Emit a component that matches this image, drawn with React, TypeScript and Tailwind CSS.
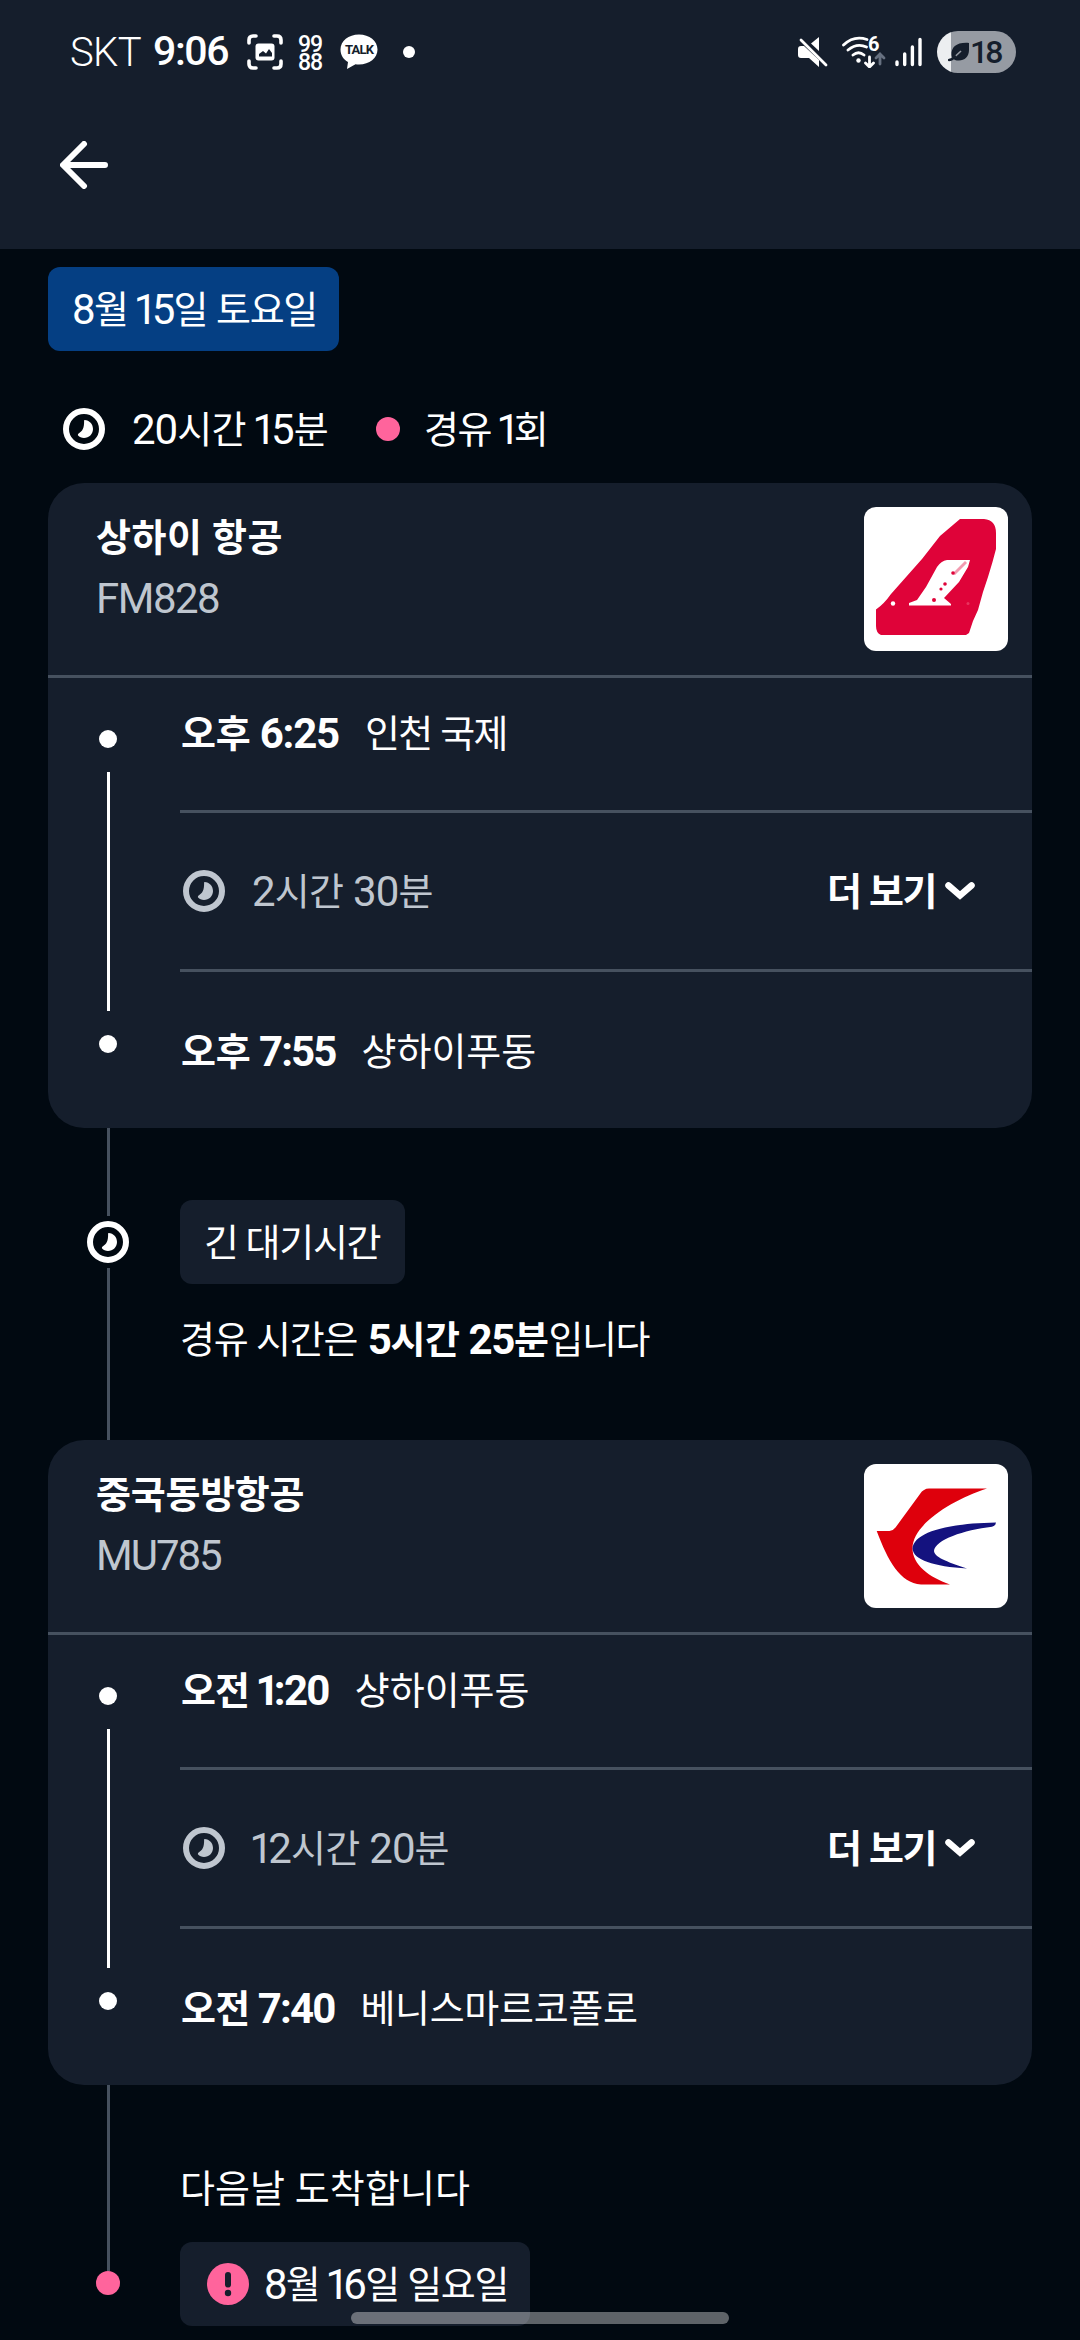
import React from "react";

const RUNS = /([\uac00-\ud7a3]+|1)/;
const HANGUL = /^[\uac00-\ud7a3]/;

// --k is the tracking of Hangul runs, --l the tracking of Latin runs and digits.
function T({ children, className = "[--k:-0.25px] [--l:-0.8px]" }: { children: string; className?: string }) {
  return (
    <span className={`block whitespace-pre pt-[3px] text-[42px] leading-[60px] ${className}`}>
      {children.split(RUNS).filter(Boolean).map((part, i) =>
        HANGUL.test(part) ? (
          <span key={i} className="relative -top-px text-[38px] tracking-[var(--k)]">{part}</span>
        ) : part === "1" ? (
          <span key={i} className="-ml-[2.5px] mr-[-4px] tracking-[var(--l)]">{part}</span>
        ) : (
          <span key={i} className="tracking-[var(--l)]">{part}</span>
        )
      )}
    </span>
  );
}

function Clock({ className = "" }: { className?: string }) {
  return (
    <svg viewBox="0 0 42 42" className={`size-[42px] shrink-0 ${className}`} fill="none">
      <circle cx="21" cy="21" r="18" stroke="currentColor" strokeWidth="6" />
      <path d="M21.5 12C26.5 12.3 30 16.2 30 21C30 26 26 30 21 30C18.6 30 16.4 29 14.9 27.3C14.8 26.6 15 26 15.6 25.6C19.4 23 21.3 20.5 21.1 12.5Z" fill="currentColor" />
    </svg>
  );
}

function ShanghaiLogo() {
  return (
    <svg viewBox="0 0 144 144" className="size-36">
      <path d="M96 12H120Q132 13 132 26V42L128.5 55L124 70L119 85L114 103L109 114L105 126L102 128H17Q12 126 12 119V102.500Q20 97 27 87L58 52L76 29Z" fill="#df0339" />
      <path d="M83 53H106L104 60L95 75L80 91L87 97V98.500H45V96L53 93L62 80L73 60Q77 54 83 53Z" fill="#fff" />
      <g fill="#df0339">
        <path d="M101 54L103 56L91 68L88 67Z" opacity=".4" />
        <circle cx="89" cy="66" r="1.800" />
        <circle cx="81" cy="77" r="1.800" />
        <circle cx="77" cy="82" r="1.600" />
        <circle cx="70" cy="93" r="2" />
      </g>
      <circle cx="29" cy="96.500" r="2.200" fill="#fff" />
      <circle cx="104" cy="96.500" r="1.500" fill="#e8345f" />
    </svg>
  );
}

function EasternLogo() {
  return (
    <svg viewBox="0 0 144 144" className="size-36">
      <path d="M12.700 67H25.500Q29 66.800 31.500 63.500L56 30Q59.500 24.500 65 24.500H123C88 36 49 60 48.500 84C48.500 101 65 113 86 120.500H57C36 119 24 97 12.700 67Z" fill="#de000c" />
      <path d="M48.500 84.500C50 69 80 59.500 132 58.500Q131.500 62 128 62.800C100 66 71 76 70 87C70.500 94 87 99 103 104.500C70 102.500 49 96 48.500 84.500Z" fill="#14127f" />
    </svg>
  );
}

function Duration({ children }: { children: string }) {
  return (
    <div className="flex h-[156px] items-center pl-[3px] text-[#bfc6cf]">
      <Clock />
      <T className="ml-[27px] [--k:-0.6px] [--l:-0.9px]">{children}</T>
      <button className="ml-auto mr-[57px] flex items-center gap-[9px] text-white">
        <T className="font-bold [--k:-1.5px] [--l:-1.8px]">더 보기</T>
        <svg viewBox="0 0 30 18" className="h-[18px] w-[30px]" fill="none" stroke="#fff" strokeWidth="6.5" strokeLinecap="round" strokeLinejoin="miter">
          <path d="M3.500 3.500L15 13.500L26.500 3.500" />
        </svg>
      </button>
    </div>
  );
}

interface Label {
  text: string;
  fit: string;
}

interface Flight {
  airline: Label;
  code: Label;
  logo: React.ReactNode;
  depart: [Label, Label];
  duration: string;
  arrive: [Label, Label];
}

function Stop({ stop: [time, place] }: { stop: [Label, Label] }) {
  return (
    <div className="flex gap-[26px] pl-[1px]">
      <T className={`font-bold ${time.fit}`}>{time.text}</T>
      <T className={place.fit}>{place.text}</T>
    </div>
  );
}

function FlightCard({ f }: { f: Flight }) {
  return (
    <section className="mx-12 h-[645px] rounded-[36px] bg-[#151e2c]">
      <header className="flex h-[195px] justify-between border-b-[3px] border-[#46515f] pl-[48px] pr-6">
        <div className="pt-[22px]">
          <T className={`font-bold ${f.airline.fit}`}>{f.airline.text}</T>
          <T className={`-mt-[3px] text-[#bfc6cf] ${f.code.fit}`}>{f.code.text}</T>
        </div>
        <div className="mt-6 size-36 overflow-hidden rounded-xl bg-white">{f.logo}</div>
      </header>
      <div className="flex">
        <div className="flex w-[132px] flex-col items-center pr-3 pt-[52px]">
          <i className="size-[18px] rounded-full bg-white" />
          <i className="my-6 ml-px h-[239px] w-[3px] bg-white" />
          <i className="size-[18px] rounded-full bg-white" />
        </div>
        <div className="flex-1">
          <div className="h-[132px] pt-[23px]">
            <Stop stop={f.depart} />
          </div>
          <div className="border-y-[3px] border-[#46515f]">
            <Duration>{f.duration}</Duration>
          </div>
          <div className="pt-[47px]">
            <Stop stop={f.arrive} />
          </div>
        </div>
      </div>
    </section>
  );
}

function StatusBar() {
  return (
    <div className="flex h-[105px] items-start justify-between pl-[70px] pr-16 pt-[30px] text-white">
      <div className="flex h-[44px] items-center">
        <span className="w-[83px] pt-px text-[40px] font-light tracking-[-0.6px]">SKT</span>
        <span className="w-[94px] text-[41px] font-medium tracking-[-1.4px]">9:06</span>
        <svg viewBox="0 0 36 36" className="size-[36px]" fill="none" stroke="#fff" strokeWidth="3.6" strokeLinecap="round">
          <path d="M2 9V6Q2 2 6 2H9M27 2H30Q34 2 34 6V9M34 27V30Q34 34 30 34H27M9 34H6Q2 34 2 30V27" />
          <rect x="8.500" y="9.500" width="19" height="17" rx="3" fill="#fff" stroke="none" />
          <path d="M12 22.500V20L16 17L19 19.500L22 15L25 19V22.500Z" fill="#151e2c" stroke="none" />
        </svg>
        <div className="ml-[14px] mt-[3px] w-[26px] text-center text-[23px] font-medium leading-[18px] tracking-[-1px]">
          99<br />88
        </div>
        <div className="relative ml-[17px] flex h-[36px] w-[38px] justify-center">
          <svg viewBox="0 0 38 36" className="absolute inset-0" fill="#fff">
            <path d="M19 0.500C8.500 0.500 0.500 7 0.500 15.500C0.500 21 3.500 25.500 8 28L7 35L15.500 30.200Q17 30.500 19 30.500C29.500 30.500 37.500 24 37.500 15.500C37.500 7 29.500 0.500 19 0.500Z" />
          </svg>
          <span className="relative text-[13px] font-bold leading-[31px] tracking-[-0.8px] text-[#151e2c]">TALK</span>
        </div>
        <i className="ml-[25px] size-[12px] rounded-full bg-white" />
      </div>
      <div className="flex h-[44px] items-center">
        <svg viewBox="0 0 30 30" className="size-[30px]" fill="#fff">
          <path d="M21 0V14L13 6.500ZM3 9H6L21 23V30L11 21H3Q0 21 0 18V12Q0 9 3 9Z" />
          <path d="M7 4L28 25" stroke="#151e2c" strokeWidth="2.500" />
          <path d="M3 3L28 28" stroke="#fff" strokeWidth="2.800" strokeLinecap="round" />
        </svg>
        <div className="relative ml-[14px] h-[32px] w-[44px]">
          <svg viewBox="0 0 44 32" className="size-full" fill="none" stroke="#fff" strokeWidth="2.800" strokeLinecap="round">
            <path d="M1.500 9Q12 -1 25 3.500M6 14Q15 6.500 24.500 11M11 19Q16.500 14.500 22 19" />
            <circle cx="16.500" cy="24.500" r="2.200" fill="#fff" stroke="none" />
            <path d="M27.500 21V30M23.500 27L27.500 31L31.500 27" />
            <path d="M38 28V19M34 22L38 18L42 22" stroke="#667080" />
          </svg>
          <span className="absolute left-[26px] top-[-2px] text-[20px] font-bold leading-[20px]">6</span>
        </div>
        <svg viewBox="0 0 27 30" className="ml-[9px] h-[30px] w-[27px]" stroke="#fff" strokeWidth="3.400" strokeLinecap="round">
          <path d="M2 25V27.500M9.700 17V27.500M17.400 10V27.500M25 2.500V27.500" />
        </svg>
        <div className="ml-[15px] flex h-[42px] w-[79px] items-center rounded-full bg-[linear-gradient(90deg,#eceef0_14px,#969ba3_14px)] pl-[11px] text-[#151e2c]">
          <svg viewBox="0 0 22 20" className="h-[20px] w-[22px]">
            <path d="M21 1V8C21 15 16 19 10 18.500C7 18.500 4 17 3.500 13C3 5 9 0 21 1Z" fill="currentColor" />
            <path d="M13 9L6 15.500" stroke="#969ba3" strokeWidth="1.600" />
            <path d="M7 14.500Q4 18 1 18" stroke="currentColor" strokeWidth="2.400" fill="none" strokeLinecap="round" />
          </svg>
          <span className="text-[32px] font-medium leading-[42px] tracking-[-3px]">18</span>
        </div>
      </div>
    </div>
  );
}

const shanghai: Flight = {
  airline: { text: "상하이 항공", fit: "[--k:0.5px] [--l:-0.8px]" },
  code: { text: "FM828", fit: "[--l:-1.5px]" },
  logo: <ShanghaiLogo />,
  depart: [
    { text: "오후 6:25", fit: "[--k:-0.25px] [--l:-1.2px]" },
    { text: "인천 국제", fit: "[--k:-1.6px] [--l:-2px]" },
  ],
  duration: "2시간 30분",
  arrive: [
    { text: "오후 7:55", fit: "[--k:-0.25px] [--l:-1.9px]" },
    { text: "샹하이푸동", fit: "[--k:0px]" },
  ],
};

const eastern: Flight = {
  airline: { text: "중국동방항공", fit: "[--k:-0.25px]" },
  code: { text: "MU785", fit: "[--l:-2px]" },
  logo: <EasternLogo />,
  depart: [
    { text: "오전 1:20", fit: "[--k:-0.9px] [--l:-1.7px]" },
    { text: "샹하이푸동", fit: "[--k:0px]" },
  ],
  duration: "12시간 20분",
  arrive: [
    { text: "오전 7:40", fit: "[--k:-0.8px] [--l:-1.9px]" },
    { text: "베니스마르코폴로", fit: "[--k:-0.3px]" },
  ],
};

export default function App() {
  return (
    <div className="relative h-[2340px] w-[1080px] overflow-hidden bg-[#010911] font-[Roboto,'Noto_Sans_CJK_KR',sans-serif] text-white">
      <div className="h-[249px] bg-[#151e2c]">
        <StatusBar />
        <svg viewBox="0 0 48 48" className="ml-[60px] mt-[36px] size-12" fill="none" stroke="#fff" strokeWidth="6" strokeLinecap="round" strokeLinejoin="round">
          <path d="M24 3L3 24L24 45M3.500 24H45" />
        </svg>
      </div>

      <div className="ml-12 mt-[18px] flex h-[84px] w-[291px] items-center rounded-xl bg-[#053f83] pl-[24px]">
        <T className="[--k:-1.3px] [--l:-1.7px]">8월 15일 토요일</T>
      </div>
      <div className="ml-[63px] mt-[36px] flex h-[84px] items-center">
        <Clock />
        <T className="ml-[27px] w-[244px] [--k:-0.8px] [--l:-1px]">20시간 15분</T>
        <i className="size-6 rounded-full bg-[#ff649c]" />
        <T className="ml-[24px] [--k:-1.5px] [--l:-2.3px]">경유 1회</T>
      </div>

      <div className="mt-3">
        <FlightCard f={shanghai} />
      </div>

      <div className="flex h-[312px]">
        <div className="flex w-[180px] flex-col items-center pl-[36px]">
          <i className="ml-px h-[88px] w-[3px] bg-[#46515f]" />
          <Clock className="my-[5px]" />
          <i className="ml-px w-[3px] flex-1 bg-[#46515f]" />
        </div>
        <div className="pt-[72px]">
          <div className="flex h-[84px] w-[225px] items-center rounded-xl bg-[#151e2c] pl-[24px]">
            <T className="[--k:-1.3px] [--l:-2.5px]">긴 대기시간</T>
          </div>
          <div className="mt-[23px] flex">
            <T className="[--k:-1.25px] [--l:-1.8px]">{"경유 시간은 "}</T>
            <T className="ml-[2px] font-bold [--k:-0.6px] [--l:-1.3px]">5시간 25분</T>
            <T className="[--k:-1.4px]">입니다</T>
          </div>
        </div>
      </div>

      <FlightCard f={eastern} />

      <div className="flex">
        <div className="flex w-[180px] flex-col items-center pl-[36px]">
          <i className="ml-px h-[186px] w-[3px] bg-[#46515f]" />
          <i className="size-6 rounded-full bg-[#ff649c]" />
        </div>
        <div className="pt-[71px]">
          <T className="[--k:0.1px] [--l:-0.8px]">다음날 도착합니다</T>
          <div className="mt-[22px] flex h-[84px] w-[350px] items-center rounded-xl bg-[#151e2c] pl-[27px]">
            <svg viewBox="0 0 42 42" className="size-[42px]">
              <circle cx="21" cy="21" r="21" fill="#ff649c" />
              <path d="M21 12V21.500" stroke="#151e2c" strokeWidth="6" strokeLinecap="round" />
              <circle cx="21" cy="30" r="3.200" fill="#151e2c" />
            </svg>
            <T className="ml-[15px] [--k:-1.4px] [--l:-1.8px]">8월 16일 일요일</T>
          </div>
        </div>
      </div>

      <div className="absolute bottom-4 left-[351px] h-3 w-[378px] rounded-full bg-white/37" />
    </div>
  );
}
